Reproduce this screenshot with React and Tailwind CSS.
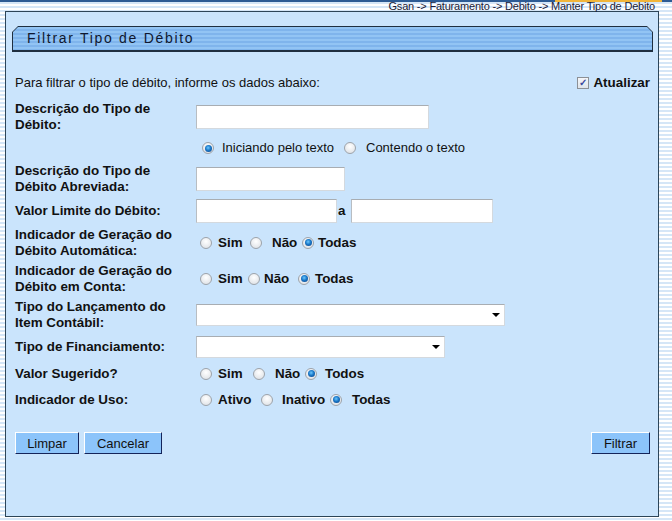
import React from "react";

const Radio = ({ checked }) => (
  <span className="flex h-[12px] w-[12px] shrink-0 items-center justify-center rounded-full border border-[#9da3aa] bg-[radial-gradient(circle_at_50%_35%,#ffffff,#d9dde2)]">
    {checked && (
      <span className="h-[7px] w-[7px] rounded-full bg-[radial-gradient(circle_at_45%_40%,#6cc8ff_0%,#1a78c8_45%,#0a3b80_100%)]" />
    )}
  </span>
);

const RadioGroup = ({ items }) => (
  <div className="flex items-center">
    {items.map((item) => (
      <div key={item.label} className={"flex items-center " + item.box}>
        <Radio checked={item.checked} />
        <span className={item.gap + (item.bold ? " text-[13.4px] font-bold" : " text-[13px]")}>{item.label}</span>
      </div>
    ))}
  </div>
);

const Field = ({ className }) => (
  <div className={"h-[24px] border border-[#d4d9de] border-t-[#a8adb2] border-l-[#b8bdc2] bg-white " + className} />
);

const Select = ({ className }) => (
  <div className={"flex h-[22px] items-center justify-end border border-[#d4d9de] border-t-[#a8adb2] border-l-[#b8bdc2] bg-white pr-[4px] " + className}>
    <span className="h-0 w-0 border-x-[4px] border-t-[4px] border-x-transparent border-t-black" />
  </div>
);

const Row = ({ label, h = "h-[32px]", children }) => (
  <div className={"flex items-center " + h}>
    <div className="w-[181px] shrink-0 text-[13.4px] font-bold leading-[16px]">{label}</div>
    {children}
  </div>
);

const Button = ({ children, className = "" }) => (
  <button className={"h-[22px] border border-t-white border-l-white border-b-[#14245a] border-r-[#14245a] bg-[#8cc4fa] text-[13px] leading-none text-[#111] " + className}>
    {children}
  </button>
);

export default function App() {
  return (
    <div className="min-h-[521px] w-[672px] bg-[repeating-linear-gradient(to_bottom,#ffffff_0px,#ffffff_2px,#d5e6f7_2px,#d5e6f7_4px)] font-['Liberation_Sans',Arial,sans-serif] text-[#111]">
      <div className="flex h-[2px]">
        <div className="flex-1 bg-[#2d5b94]" />
        <div className="w-[107px] bg-[#f2b53a]" />
        <div className="w-[10px] bg-[#2d5b94]" />
      </div>
      <div className="flex h-[9px] items-center justify-end pr-[17px] text-[11px] leading-none tracking-[-0.2px] text-[#1b1b38]">
        Gsan -&gt; Faturamento -&gt; Debito -&gt; Manter Tipo de Debito
      </div>
      <div className="ml-[5px] h-[506px] w-[654px] border border-[#2d4558] bg-[#cae4fc]">
        <div className="ml-[6px] mt-[14px] h-[26px] w-[641px] bg-[#1f2f40] p-[1px] pb-[2px] [clip-path:polygon(6px_0,calc(100%_-_6px)_0,100%_6px,100%_100%,0_100%,0_6px)]">
          <div className="flex h-full items-center bg-[repeating-linear-gradient(to_bottom,#92c4f4_0px,#92c4f4_2px,#7fb4ec_2px,#7fb4ec_4px)] pl-[14px] text-[14px] tracking-[1.7px] text-[#0f1830] [clip-path:polygon(5px_0,calc(100%_-_5px)_0,100%_5px,100%_100%,0_100%,0_5px)]">
            Filtrar Tipo de Débito
          </div>
        </div>

        <div className="pl-[9px] pr-[8px]">
          <div className="mt-[22px] flex h-[18px] items-center justify-between">
            <span className="text-[13px]">Para filtrar o tipo de débito, informe os dados abaixo:</span>
            <div className="flex items-center">
              <span className="flex h-[12px] w-[12px] items-center justify-center border border-[#8c9096] bg-[linear-gradient(#f4f6f9,#dfe4ea)] text-[10px] font-bold leading-none text-[#3b4a9e]">
                ✓
              </span>
              <span className="ml-[4px] text-[13.4px] font-bold">Atualizar</span>
            </div>
          </div>

          <div className="mt-[9px] flex flex-col gap-[4px]">
            <Row label={<>Descrição do Tipo de<br />Débito:</>}>
              <Field className="w-[233px]" />
            </Row>
            <Row label="" h="h-[22px]">
              <div className="ml-[6px]">
                <RadioGroup
                  items={[
                    { label: "Iniciando pelo texto", checked: true, box: "w-[142px]", gap: "ml-[8px]" },
                    { label: "Contendo o texto", checked: false, box: "", gap: "ml-[10px]" },
                  ]}
                />
              </div>
            </Row>
            <Row label={<>Descrição do Tipo de<br />Débito Abreviada:</>}>
              <Field className="w-[149px]" />
            </Row>
            <Row label="Valor Limite do Débito:" h="h-[24px]">
              <Field className="w-[141px]" />
              <span className="ml-[1px] w-[13px] text-[13.4px] font-bold">a</span>
              <Field className="w-[142px]" />
            </Row>
            <Row label={<>Indicador de Geração do<br />Débito Automática:</>}>
              <div className="ml-[4px]">
                <RadioGroup
                  items={[
                    { label: "Sim", checked: false, bold: true, box: "w-[50px]", gap: "ml-[6px]" },
                    { label: "Não", checked: false, bold: true, box: "w-[52px]", gap: "ml-[10px]" },
                    { label: "Todas", checked: true, bold: true, box: "", gap: "ml-[4px]" },
                  ]}
                />
              </div>
            </Row>
            <Row label={<>Indicador de Geração do<br />Débito em Conta:</>}>
              <div className="ml-[4px]">
                <RadioGroup
                  items={[
                    { label: "Sim", checked: false, bold: true, box: "w-[48px]", gap: "ml-[6px]" },
                    { label: "Não", checked: false, bold: true, box: "w-[50px]", gap: "ml-[4px]" },
                    { label: "Todas", checked: true, bold: true, box: "", gap: "ml-[5px]" },
                  ]}
                />
              </div>
            </Row>
            <Row label={<>Tipo do Lançamento do<br />Item Contábil:</>}>
              <Select className="w-[309px]" />
            </Row>
            <Row label="Tipo de Financiamento:" h="h-[24px]">
              <Select className="w-[249px]" />
            </Row>
            <Row label="Valor Sugerido?" h="h-[22px]">
              <div className="ml-[4px]">
                <RadioGroup
                  items={[
                    { label: "Sim", checked: false, bold: true, box: "w-[53px]", gap: "ml-[6px]" },
                    { label: "Não", checked: false, bold: true, box: "w-[52px]", gap: "ml-[10px]" },
                    { label: "Todos", checked: true, bold: true, box: "", gap: "ml-[8px]" },
                  ]}
                />
              </div>
            </Row>
            <Row label="Indicador de Uso:" h="h-[22px]">
              <div className="ml-[4px]">
                <RadioGroup
                  items={[
                    { label: "Ativo", checked: false, bold: true, box: "w-[61px]", gap: "ml-[6px]" },
                    { label: "Inativo", checked: false, bold: true, box: "w-[69px]", gap: "ml-[9px]" },
                    { label: "Todas", checked: true, bold: true, box: "", gap: "ml-[10px]" },
                  ]}
                />
              </div>
            </Row>
          </div>

          <div className="mt-[21px] flex items-center">
            <Button className="w-[64px]">Limpar</Button>
            <Button className="ml-[5px] w-[78px]">Cancelar</Button>
            <Button className="ml-auto w-[59px]">Filtrar</Button>
          </div>
        </div>
      </div>
    </div>
  );
}
